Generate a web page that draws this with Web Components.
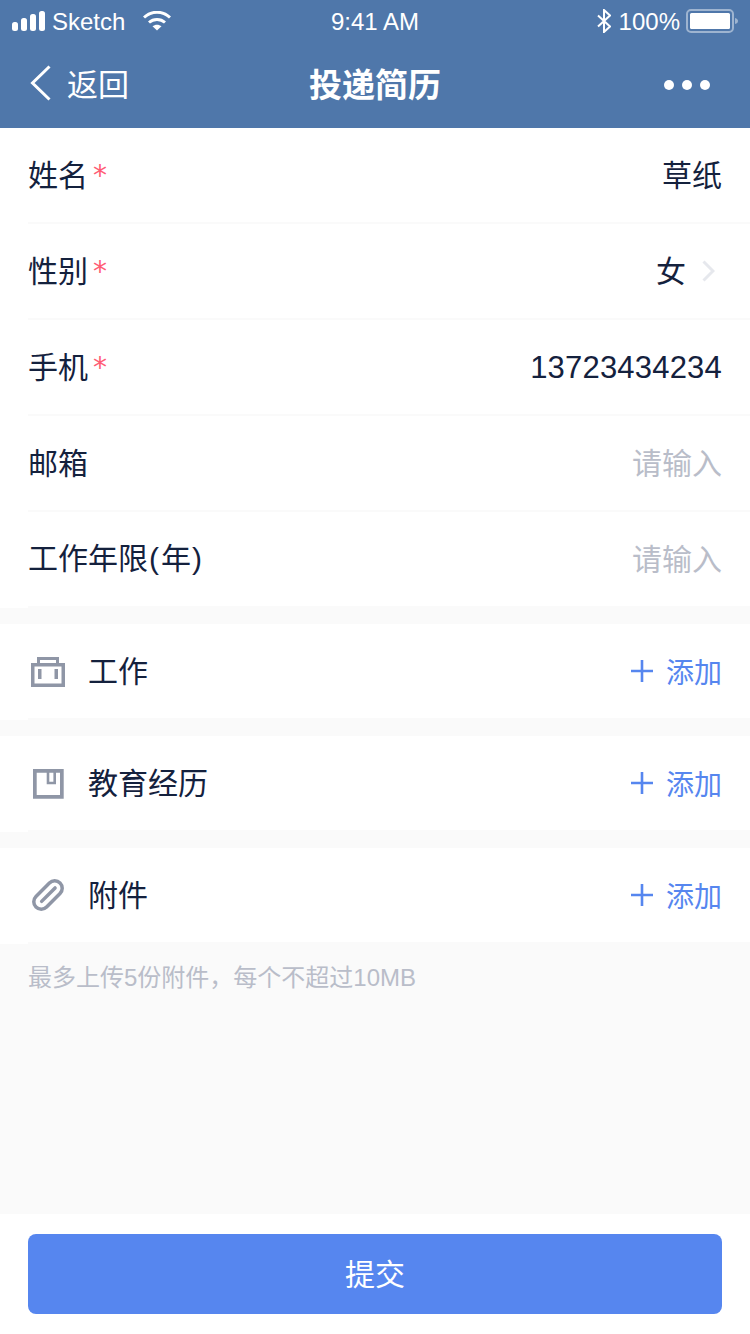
<!DOCTYPE html>
<html lang="zh-CN">
<head>
<meta charset="utf-8">
<title>投递简历</title>
<style>
  html, body { margin: 0; padding: 0; }
  body {
    width: 750px;
    height: 1334px;
    overflow: hidden;
    background: #fafafa;
    font-family: "Noto Sans CJK SC", sans-serif;
    color: #14213d;
  }
</style>
</head>
<body>
<app-header title-text="投递简历"></app-header>
<form-section>
  <form-row label="姓名" required value="草纸"></form-row>
  <form-row label="性别" required value="女" arrow></form-row>
  <form-row label="手机" required value="13723434234"></form-row>
  <form-row label="邮箱" placeholder="请输入"></form-row>
  <form-row label="工作年限(年)" placeholder="请输入"></form-row>
</form-section>
<add-row label="工作" icon="work"></add-row>
<add-row label="教育经历" icon="book"></add-row>
<add-row label="附件" icon="clip"></add-row>
<p-hint>最多上传5份附件，每个不超过10MB</p-hint>
<submit-bar>提交</submit-bar>

<script>
const CJK = `"Noto Sans CJK SC", sans-serif`;
const LATIN = `"Liberation Sans", "Noto Sans CJK SC", sans-serif`;

class AppHeader extends HTMLElement {
  constructor() {
    super();
    this.attachShadow({ mode: "open" });
  }

  connectedCallback() {
    this.shadowRoot.innerHTML = /* html */`
    <style>
      :host { display: block; height: 128px; background: #4f77aa; color: #fff; }
      .status {
        height: 40px;
        display: grid;
        grid-template-columns: 1fr auto 1fr;
        align-items: center;
        font: 24px/40px ${LATIN};
        padding: 0 12px;
      }
      .status span { padding-top: 2px; }
      .left, .right { display: flex; align-items: center; }
      .right { justify-content: flex-end; }
      .carrier { margin-left: 7px; }
      .wifi { margin-left: 18px; }
      .bt { margin-right: 8px; }
      .battery { margin-left: 6px; }
      .nav {
        height: 88px;
        box-sizing: border-box;
        padding: 0 30px 2px;
        display: grid;
        grid-template-columns: 1fr auto 1fr;
        align-items: center;
      }
      .back { display: flex; align-items: center; gap: 16px; font: 31px/40px ${CJK}; }
      .title { font: 700 33px/44px ${CJK}; }
      .more { display: flex; justify-content: flex-end; gap: 8px; padding: 4px 10px 0 0; }
      .more i { width: 10px; height: 10px; border-radius: 50%; background: #fff; }
    </style>
    <div class="status">
      <div class="left">
        <svg width="33" height="20" viewBox="0 0 33 20" fill="#fff">
          <rect x="0" y="11" width="6" height="9" rx="2.5"/>
          <rect x="9" y="7" width="6" height="13" rx="2.5"/>
          <rect x="18" y="3" width="6" height="17" rx="2.5"/>
          <rect x="27" y="0" width="6" height="20" rx="2.5"/>
        </svg>
        <span class="carrier">Sketch</span>
        <svg class="wifi" width="28" height="20" viewBox="0 0 28 20" fill="none" stroke="#fff" stroke-width="3">
          <path d="M1 6.5C8.5 -0.5 19.5 -0.5 27 6.5"/>
          <path d="M6 11.5C10.5 7.5 17.5 7.5 22 11.5"/>
          <path d="M14 19.5L9.5 15.3C12 13.2 16 13.2 18.5 15.3Z" fill="#fff" stroke="none"/>
        </svg>
      </div>
      <span>9:41 AM</span>
      <div class="right">
        <svg class="bt" width="14" height="24" viewBox="0 0 14 24" fill="none" stroke="#fff" stroke-width="2">
          <path d="M1 6.5L13 17.5L7 23V1L13 6.5L1 17.5"/>
        </svg>
        <span>100%</span>
        <svg class="battery" width="52" height="24" viewBox="0 0 52 24">
          <rect x="1" y="1" width="46" height="22" rx="4" fill="none" stroke="#fff" stroke-opacity=".45" stroke-width="2"/>
          <rect x="4" y="4" width="40" height="16" rx="1.5" fill="#fff"/>
          <path d="M49 9C51 9.5 52 10.5 52 12C52 13.5 51 14.5 49 15Z" fill="#fff" fill-opacity=".45"/>
        </svg>
      </div>
    </div>
    <div class="nav">
      <div class="back">
        <svg width="21" height="36" viewBox="0 0 21 36" fill="none" stroke="#fff" stroke-width="3">
          <path d="M19.5 1.5L2.5 18L19.5 34.5"/>
        </svg>
        <span>返回</span>
      </div>
      <div class="title">${this.getAttribute("title-text")}</div>
      <div class="more"><i></i><i></i><i></i></div>
    </div>`;
  }
}

class FormSection extends HTMLElement {
  constructor() {
    super();
    this.attachShadow({ mode: "open" });
    this.shadowRoot.innerHTML = /* html */`
    <style>
      :host { display: block; background: #fff; }
    </style>
    <slot></slot>`;
  }
}

class FormRow extends HTMLElement {
  constructor() {
    super();
    this.attachShadow({ mode: "open" });
  }

  connectedCallback() {
    const value = this.getAttribute("value");
    const placeholder = this.getAttribute("placeholder");
    const label = this.getAttribute("label")
      .replace("(", `<span class="open">(</span>`)
      .replace(")", `<span class="close">)</span>`);
    this.shadowRoot.innerHTML = /* html */`
    <style>
      :host {
        display: block;
        height: 96px;
        box-sizing: border-box;
        padding-left: 28px;
        background: #fff;
      }
      .inner {
        height: 96px;
        box-sizing: border-box;
        border-bottom: 2px solid #fafafa;
        padding-right: 28px;
        display: flex;
        align-items: center;
        justify-content: space-between;
        font: 30px/40px ${CJK};
      }
      .label { display: flex; align-items: flex-start; }
      .text { padding-bottom: 4px; }
      .open { font-family: ${LATIN}; margin: 0 2px 0 1px; }
      .close { font-family: ${LATIN}; margin-left: 1px; }
      .star {
        color: #ff5c75;
        margin: 8px 0 0 5px;
        font: 28px/30px "DejaVu Sans", sans-serif;
      }
      .value { display: flex; align-items: center; }
      .value span { padding-bottom: 4px; }
      .value .num { font: 31px/40px ${LATIN}; letter-spacing: .2px; padding: 2px 0 0; }
      .ph { color: #b9bdc9; }
      svg { margin-left: 16px; margin-right: 7px; }
    </style>
    <div class="inner">
      <div class="label"><span class="text">${label}</span>${this.hasAttribute("required") ? `<span class="star">*</span>` : ""}</div>
      <div class="value">
        ${value ? `<span class="${/^\d+$/.test(value) ? "num" : ""}">${value}</span>` : ""}
        ${placeholder ? `<span class="ph">${placeholder}</span>` : ""}
        ${this.hasAttribute("arrow") ? `<svg width="13" height="22" viewBox="0 0 13 22" fill="none" stroke="#e6e8ed" stroke-width="3"><path d="M1.5 1.5L11 11L1.5 20.5"/></svg>` : ""}
      </div>
    </div>`;
  }
}

class AddRow extends HTMLElement {
  static icons = {
    work: `<path d="M4.75 13.75H35.25V34.25H4.75Z" stroke-width="3.5"/><path d="M10.5 12V7.5H29.5V12" stroke-width="3"/><path d="M11.75 18V28M28.25 18V28" stroke-width="3.5"/>`,
    book: `<path d="M6.85 7.85H33.85V33.85H6.85Z" stroke-width="3.7"/><path d="M20 8V20H26.7V8" stroke-width="2.6"/>`,
    clip: `<g transform="rotate(45 20 20)" stroke-width="3.5" stroke-linecap="round"><rect x="12.5" y="3" width="15" height="34" rx="7.5"/><path d="M20 10V29"/></g>`
  };

  constructor() {
    super();
    this.attachShadow({ mode: "open" });
  }

  connectedCallback() {
    this.shadowRoot.innerHTML = /* html */`
    <style>
      :host {
        display: block;
        margin-top: 16px;
        padding-left: 28px;
        background: #fff;
      }
      .inner {
        height: 96px;
        box-sizing: border-box;
        border-bottom: 2px solid #fafafa;
        padding-right: 28px;
        display: flex;
        align-items: center;
        font: 30px/40px ${CJK};
      }
      .icon { width: 40px; height: 40px; margin-right: 20px; }
      .label { flex: 1; padding-bottom: 4px; }
      .add { display: flex; align-items: center; gap: 13px; color: #5686ef; font-size: 28px; }
    </style>
    <div class="inner">
      <svg class="icon" viewBox="0 0 40 40" fill="none" stroke="#8f96a6">${AddRow.icons[this.getAttribute("icon")]}</svg>
      <div class="label">${this.getAttribute("label")}</div>
      <div class="add">
        <svg width="22" height="22" viewBox="0 0 22 22" stroke="#5686ef" stroke-width="2.6"><path d="M0 11H22M11 0V22"/></svg>
        <span>添加</span>
      </div>
    </div>`;
  }
}

class PHint extends HTMLElement {
  constructor() {
    super();
    this.attachShadow({ mode: "open" });
    this.shadowRoot.innerHTML = /* html */`
    <style>
      :host {
        display: block;
        height: 270px;
        box-sizing: border-box;
        padding: 18px 28px 0;
        color: #b9bdc9;
        font: 24px/32px ${LATIN};
      }
    </style>
    <slot></slot>`;
  }
}

class SubmitBar extends HTMLElement {
  constructor() {
    super();
    this.attachShadow({ mode: "open" });
    this.shadowRoot.innerHTML = /* html */`
    <style>
      :host {
        display: block;
        height: 120px;
        box-sizing: border-box;
        padding: 20px 28px;
        background: #fff;
      }
      button {
        display: block;
        width: 100%;
        height: 80px;
        border: 0;
        padding: 0 0 4px;
        border-radius: 8px;
        background: #5686ef;
        color: #fff;
        font: 30px/76px ${CJK};
      }
    </style>
    <button><slot></slot></button>`;
  }
}

customElements.define("app-header", AppHeader);
customElements.define("form-section", FormSection);
customElements.define("form-row", FormRow);
customElements.define("add-row", AddRow);
customElements.define("p-hint", PHint);
customElements.define("submit-bar", SubmitBar);
</script>
</body>
</html>
